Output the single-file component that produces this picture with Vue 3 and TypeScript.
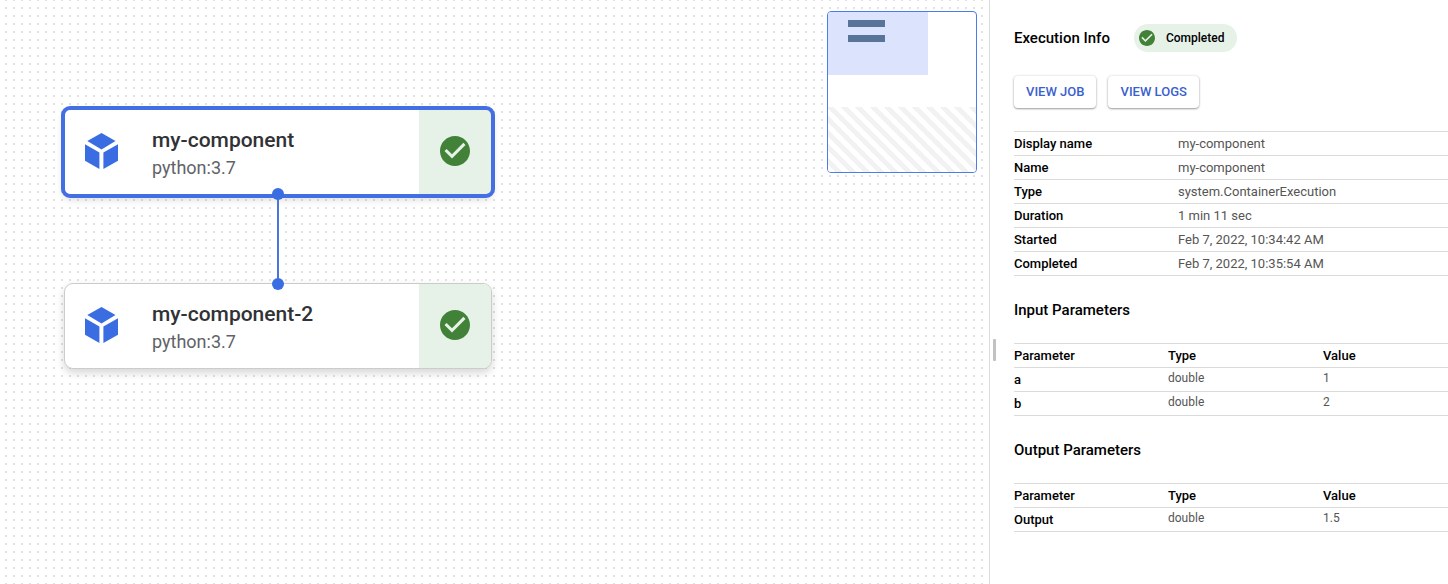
<script setup lang="ts">
interface GraphNode {
  id: string
  name: string
  image: string
  x: number
  y: number
}

const nodes: GraphNode[] = [
  { id: 'first', name: 'my-component', image: 'python:3.7', x: 64, y: 109 },
  { id: 'second', name: 'my-component-2', image: 'python:3.7', x: 64, y: 283 },
]
const selected = 'first'

const details: [string, string][] = [
  ['Display name', 'my-component'],
  ['Name', 'my-component'],
  ['Type', 'system.ContainerExecution'],
  ['Duration', '1 min 11 sec'],
  ['Started', 'Feb 7, 2022, 10:34:42 AM'],
  ['Completed', 'Feb 7, 2022, 10:35:54 AM'],
]

const groups = [
  {
    title: 'Input Parameters',
    rows: [
      { name: 'a', type: 'double', value: '1' },
      { name: 'b', type: 'double', value: '2' },
    ],
  },
  { title: 'Output Parameters', rows: [{ name: 'Output', type: 'double', value: '1.5' }] },
]
</script>

<template>
  <div class="page">
    <main class="canvas">
      <button
        v-for="node in nodes"
        :key="node.id"
        type="button"
        class="node"
        :class="{ selected: node.id === selected }"
        :style="{ left: node.x + 'px', top: node.y + 'px' }"
      >
        <svg class="cube" viewBox="0 0 34 36" aria-hidden="true">
          <path d="M16.5 0 30.5 8 16.5 16.5 2.3 8ZM0 11.3 14.4 19.6V36L0 27.8ZM18.4 19.6 33 11.3V27.8L18.4 36Z" />
        </svg>
        <span class="labels">
          <span class="name">{{ node.name }}</span>
          <span class="image">{{ node.image }}</span>
        </span>
        <span class="state">
          <svg class="check" viewBox="2 2 20 20" aria-hidden="true">
            <path d="M12 2C6.48 2 2 6.48 2 12s4.48 10 10 10 10-4.480 10-10S17.520 2 12 2zm-2 15l-5-5 1.410-1.410L10 14.170l7.590-7.590L19 8l-9 9z" />
          </svg>
        </span>
      </button>
      <svg class="edge" viewBox="0 0 12 102" aria-hidden="true">
        <path d="M6 6V96" />
        <circle cx="6" cy="6" r="6" />
        <circle cx="6" cy="96" r="6" />
      </svg>
      <div class="minimap">
        <div class="viewport">
          <span class="mini"></span>
          <span class="mini"></span>
        </div>
        <div class="hatch"></div>
      </div>
    </main>

    <aside class="panel">
      <span class="handle"></span>
      <header class="head">
        <h2>Execution Info</h2>
        <span class="badge">
          <svg class="check" viewBox="2 2 20 20" aria-hidden="true">
            <path d="M12 2C6.48 2 2 6.48 2 12s4.48 10 10 10 10-4.480 10-10S17.520 2 12 2zm-2 15l-5-5 1.410-1.410L10 14.170l7.590-7.590L19 8l-9 9z" />
          </svg>
          Completed
        </span>
      </header>
      <div class="actions">
        <button type="button">VIEW JOB</button>
        <button type="button">VIEW LOGS</button>
      </div>
      <table class="details">
        <tbody>
          <tr v-for="[label, value] in details" :key="label">
            <th scope="row">{{ label }}</th>
            <td>{{ value }}</td>
          </tr>
        </tbody>
      </table>
      <section v-for="group in groups" :key="group.title">
        <h2>{{ group.title }}</h2>
        <table class="params">
          <thead>
            <tr>
              <th scope="col">Parameter</th>
              <th scope="col">Type</th>
              <th scope="col">Value</th>
            </tr>
          </thead>
          <tbody>
            <tr v-for="row in group.rows" :key="row.name">
              <th scope="row">{{ row.name }}</th>
              <td>{{ row.type }}</td>
              <td>{{ row.value }}</td>
            </tr>
          </tbody>
        </table>
      </section>
    </aside>
  </div>
</template>

<style>
body {
  margin: 0;
}
</style>

<style scoped>
.page {
  display: flex;
  min-height: 100vh;
  background: #fff;
  color: #000;
  font-family: Roboto, sans-serif;
}
.page * {
  box-sizing: border-box;
}
.canvas {
  position: relative;
  flex: 1;
  min-width: 0;
  overflow: hidden;
  background-image: url("data:image/svg+xml,%3Csvg xmlns='http://www.w3.org/2000/svg' width='8' height='8'%3E%3Crect width='2' height='2' fill='%23e2e2e2'/%3E%3C/svg%3E");
  background-position: 5px 7px;
}
.node {
  position: absolute;
  display: flex;
  align-items: center;
  width: 428px;
  height: 86px;
  padding: 0 0 0 20px;
  border: 1px solid #ccc;
  border-radius: 9px;
  background: #fff;
  box-shadow: 0 4px 8px rgba(0, 0, 0, 0.16);
  font-family: inherit;
  text-align: left;
}
.node.selected {
  border-color: #fff;
  outline: 4px solid #446ee4;
  outline-offset: -1px;
  border-radius: 6px;
}
.cube {
  width: 34px;
  height: 36px;
  margin: 0 33px 3px 0;
  fill: #396de1;
}
.labels {
  display: flex;
  flex: 1;
  flex-direction: column;
  padding-top: 3px;
}
.name {
  color: #303236;
  font-size: 21px;
  font-weight: 500;
  line-height: 28px;
}
.image {
  color: #5f6368;
  font-size: 18px;
  line-height: 28px;
}
.state {
  display: flex;
  align-items: center;
  justify-content: center;
  align-self: stretch;
  width: 72px;
  padding-bottom: 3px;
  border-radius: 0 8px 8px 0;
  background: #e6f1e7;
}
.node.selected .state {
  border-radius: 0 4px 4px 0;
}
.check {
  fill: #428238;
}
.state .check {
  width: 30px;
  height: 30px;
}
.edge {
  position: absolute;
  left: 272px;
  top: 188px;
  width: 12px;
  height: 102px;
  fill: #396de1;
  stroke: none;
}
.edge path {
  stroke: #4a76da;
  stroke-width: 2;
}
.minimap {
  position: absolute;
  top: 11px;
  right: 12px;
  display: flex;
  flex-direction: column;
  justify-content: space-between;
  width: 150px;
  height: 162px;
  overflow: hidden;
  border: 1px solid #4d7ce8;
  border-radius: 4px;
  background: #fff;
}
.viewport {
  display: flex;
  flex-direction: column;
  gap: 8px;
  width: 100px;
  height: 63px;
  padding: 8px 0 0 20px;
  background: #dce4fd;
}
.mini {
  width: 37px;
  height: 7px;
  background: #587498;
}
.hatch {
  height: 65px;
  background: repeating-linear-gradient(45deg, #fff 0 5px, #f2f2f2 5px 10px);
}
.panel {
  position: relative;
  width: 459px;
  padding: 24px 0 0 24px;
  border-left: 1px solid #dadce0;
  background: #fff;
}
.handle {
  position: absolute;
  left: 3px;
  top: 339px;
  width: 3px;
  height: 22px;
  border-radius: 1px;
  background: #c2c2c2;
}
h2 {
  margin: 0;
  font-size: 15px;
  font-weight: 500;
  line-height: 28px;
}
.head {
  display: flex;
  align-items: center;
  gap: 24px;
}
.badge {
  display: flex;
  align-items: center;
  gap: 11px;
  height: 28px;
  padding: 0 13px 0 5px;
  border-radius: 14px;
  background: #e6f1e7;
  font-size: 12px;
  font-weight: 500;
}
.badge .check {
  width: 16px;
  height: 16px;
}
.actions {
  display: flex;
  gap: 12px;
  margin: 24px 0 23px;
}
.actions button {
  height: 32px;
  padding: 0 12px 2px;
  border: 0;
  border-radius: 4px;
  background: #fff;
  box-shadow: 0 1px 2px rgba(0, 0, 0, 0.35), 0 0 3px rgba(0, 0, 0, 0.14);
  color: #3b5fcf;
  font-family: inherit;
  font-size: 13px;
  font-weight: 500;
}
table {
  width: 100%;
  border-collapse: separate;
  border-spacing: 0;
  border-top: 1px solid #dadada;
  table-layout: fixed;
  font-size: 13px;
  line-height: 23px;
}
th,
td {
  height: 24px;
  padding: 0;
  border-bottom: 1px solid #dadada;
  text-align: left;
  vertical-align: top;
}
th {
  font-weight: 500;
}
td {
  color: #555;
}
.details th {
  width: 164px;
}
.params {
  table-layout: auto;
}
.params th:first-child {
  width: 154px;
}
.params th:nth-child(2) {
  width: 155px;
}
.params td {
  font-size: 12px;
  line-height: 20px;
}
section h2 {
  margin: 20px 0 19px;
}
</style>
